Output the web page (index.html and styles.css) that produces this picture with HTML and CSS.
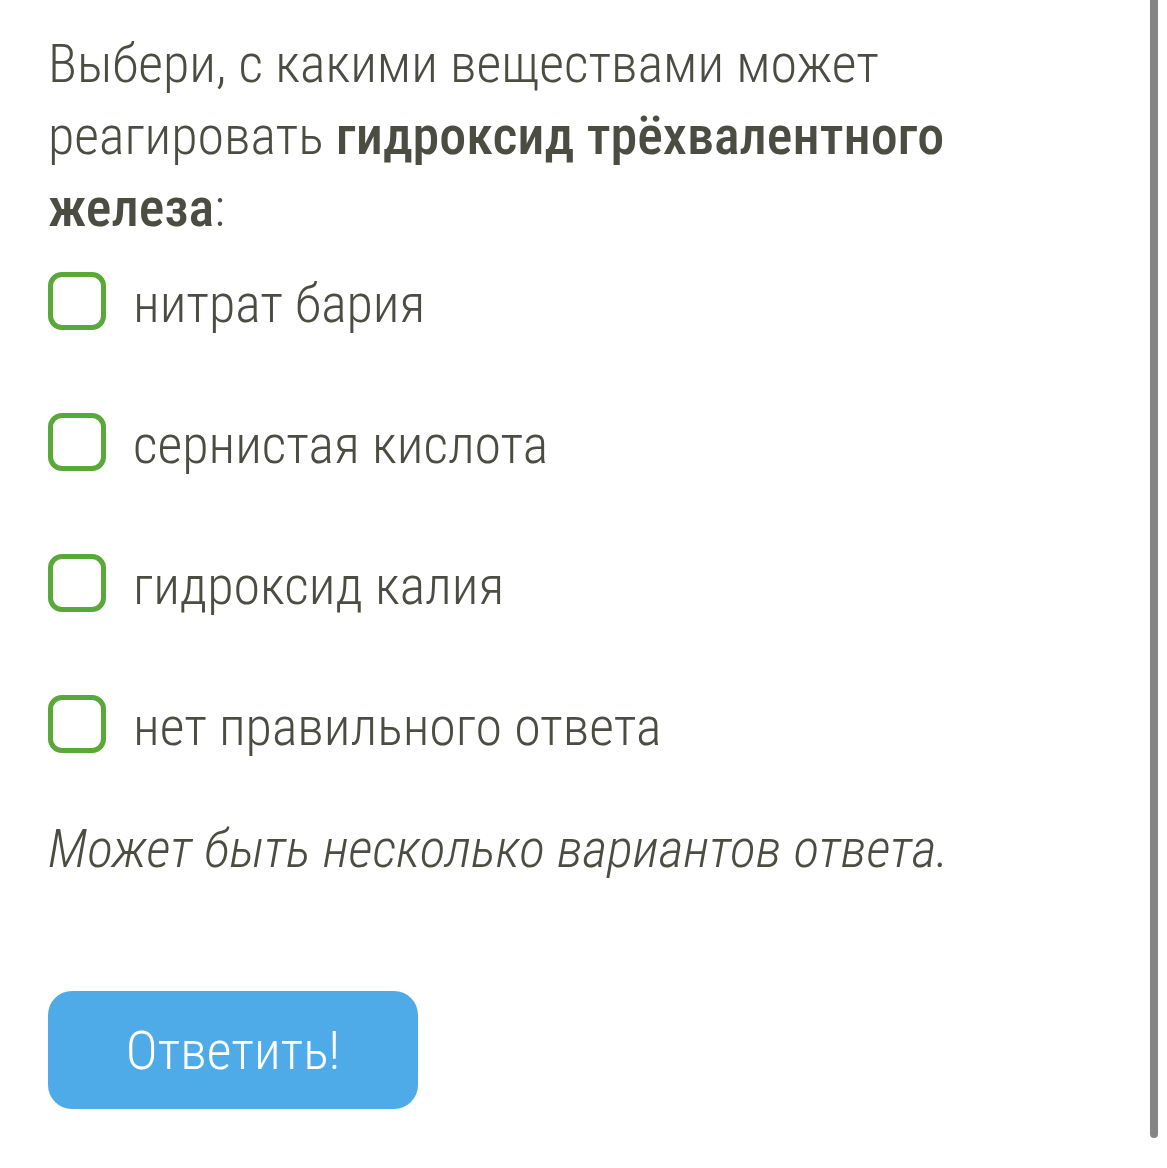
FILE: index.html
```html
<!DOCTYPE html>
<html lang="ru">
<head>
<meta charset="utf-8">
<link rel="stylesheet" href="styles.css">
</head>
<body>
<div class="page">
  <p class="question">Выбери, с какими веществами может реагировать <b>гидроксид трёхвалентного железа</b>:</p>
  <ul class="options">
    <li class="option"><span class="box"></span><span class="label">нитрат бария</span></li>
    <li class="option"><span class="box"></span><span class="label">сернистая кислота</span></li>
    <li class="option"><span class="box"></span><span class="label">гидроксид калия</span></li>
    <li class="option"><span class="box"></span><span class="label">нет правильного ответа</span></li>
  </ul>
  <p class="hint">Может быть несколько вариантов ответа.</p>
  <button class="submit">Ответить!</button>
</div>
<div class="scrollbar"></div>
</body>
</html>
```
FILE: styles.css
```css
html, body {
  margin: 0;
  padding: 0;
  background: #ffffff;
}
body {
  font-family: "Roboto Condensed", Roboto, "Liberation Sans", sans-serif;
  font-stretch: 75%;
  font-weight: 300;
  color: #4b4d43;
  overflow: hidden;
  height: 1168px;
}
.page {
  padding: 28px 0 0 48px;
}
.question {
  margin: 0;
  font-size: 54px;
  line-height: 72px;
  width: 960px;
}
.question b {
  font-weight: 500;
}
.options {
  list-style: none;
  margin: 28px 0 0 0;
  padding: 0;
  display: flex;
  flex-direction: column;
  gap: 83px;
}
.option {
  display: flex;
  align-items: center;
  gap: 27px;
  height: 58px;
}
.box {
  box-sizing: border-box;
  width: 58px;
  height: 58px;
  border: 5px solid #5aa83a;
  border-radius: 14px;
  flex: none;
}
.label {
  font-size: 54px;
  line-height: 72px;
  position: relative;
  top: 3px;
}
.hint {
  margin: 60px 0 0 0;
  font-size: 54px;
  line-height: 72px;
  font-style: italic;
}
.submit {
  display: block;
  margin-top: 106px;
  width: 370px;
  height: 118px;
  padding: 0;
  border: none;
  border-radius: 24px;
  background: #4eabe8;
  color: #ffffff;
  font-family: inherit;
  font-stretch: 75%;
  font-weight: 300;
  font-size: 54px;
}
.scrollbar {
  position: absolute;
  top: 0;
  left: 1150px;
  width: 8px;
  height: 1138px;
  background: #858585;
  border-radius: 0 0 4px 4px;
}
```
